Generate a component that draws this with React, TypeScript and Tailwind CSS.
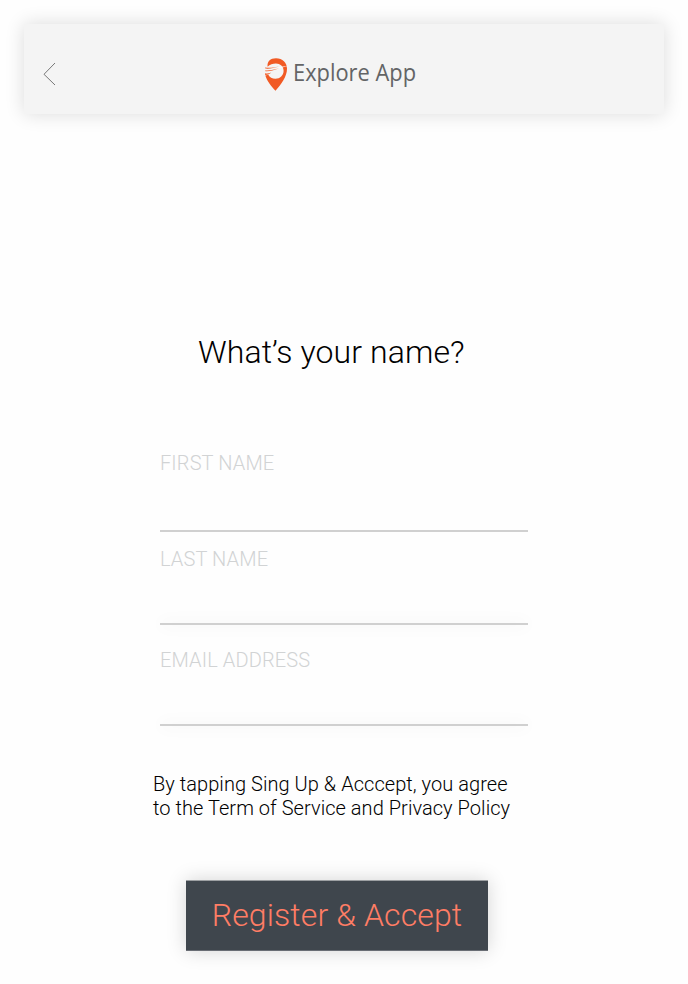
import React from "react";

const fields = [
  { label: "FIRST NAME", box: "h-[81px]", line: "" },
  { label: "LAST NAME", box: "h-[78px] mt-[15px]", line: "shadow-[0_0_16px_rgba(0,0,0,0.12)]" },
  { label: "EMAIL ADDRESS", box: "h-[78px] mt-[23px]", line: "shadow-[0_0_16px_rgba(0,0,0,0.12)]" },
];

export default function App() {
  return (
    <main className="flex h-[984px] w-[688px] flex-col overflow-hidden bg-[#fefefe] font-['Roboto',sans-serif] font-light text-black">
      <header className="mx-6 mt-6 flex h-[90px] shrink-0 items-center bg-[#f4f4f4] shadow-[0_0_18px_rgba(0,0,0,0.14)]">
        <button aria-label="Back" className="ml-[18px] mt-[10px] w-[15px]">
          <svg width="15" height="24" viewBox="0 0 15 24" fill="none" stroke="#777" strokeWidth="1">
            <path d="M13 1 2 12.3 13 23" />
          </svg>
        </button>
        <div className="ml-[207px] mt-[10px] flex items-center">
          <svg width="24" height="34" viewBox="0 0 24 34" className="overflow-visible">
            <path fill="#f15a24" d="M3.6 9.8C2.9 4.5 6.3 1.2 12 1.2c6.5 0 11 4.4 11 10.6 0 7.8-5.8 15.8-11.5 22C7.7 29.6 3 24 1.3 18.4l3-.6c1.3 2.6 3.9 4 7.1 4 4.6 0 8.2-3.5 8.2-8 0-4.1-3.4-7.2-7.7-7.2-3 0-6 .8-8.3 3.2Z" />
            <path d="M12 11.6C16 10.2 19 9.4 25.2 8.8 20.5 9.8 16 11.4 12 12.3Z" fill="#fff" />
            <path d="M1 10.4c5 .6 8.500 0 14-1C10.500 10.700 6 12 1.400 11.600Z" fill="#f15a24" />
            <path d="M1 13.400c5 .4 9-.7 14.500-2.400C10.800 12.900 6.500 14.600 1.500 14.300Z" fill="#f15a24" />
            <path d="M1 16.300c2.500.4 4.300.1 6.200-.7-1.500 1.400-3.200 2.400-6 2.400Z" fill="#f15a24" />
          </svg>
          <span className="relative -top-[2px] ml-[5px] origin-left scale-x-[0.95] whitespace-nowrap font-['Open_Sans',sans-serif] text-[23px] leading-8 font-normal text-[#636466]">Explore App</span>
        </div>
      </header>
      <h1 className="ml-[198px] mt-[218px] whitespace-nowrap text-[32px] leading-[40px] tracking-[0.1px]">What’s your name?</h1>
      <form className="ml-[160px] mt-[79px] w-[368px]">
        {fields.map((f) => (
          <label key={f.label} className={`flex flex-col justify-between ${f.box}`}>
            <span className="text-[20px] leading-6 tracking-[0.12px] text-[#d1d3d4]">{f.label}</span>
            <span className={`h-[2px] w-full bg-[#d0d0d0] ${f.line}`} />
          </label>
        ))}
      </form>
      <p className="ml-[153px] mt-[46px] whitespace-nowrap text-[20px] leading-6 tracking-[0.05px]">
        By tapping Sing Up &amp; Acccept, you agree<br />to the Term of Service and Privacy Policy
      </p>
      <button className="ml-[186px] mt-[60px] h-[71px] w-[302px] shrink-0 whitespace-nowrap border-y border-t-[#9da0a3] border-b-[#696d74] bg-[#3f464d] pb-[1px] text-[32px] tracking-[0.12px] text-[#ff7d65] shadow-[0_0_18px_rgba(0,0,0,0.17)]">
        Register &amp; Accept
      </button>
    </main>
  );
}
